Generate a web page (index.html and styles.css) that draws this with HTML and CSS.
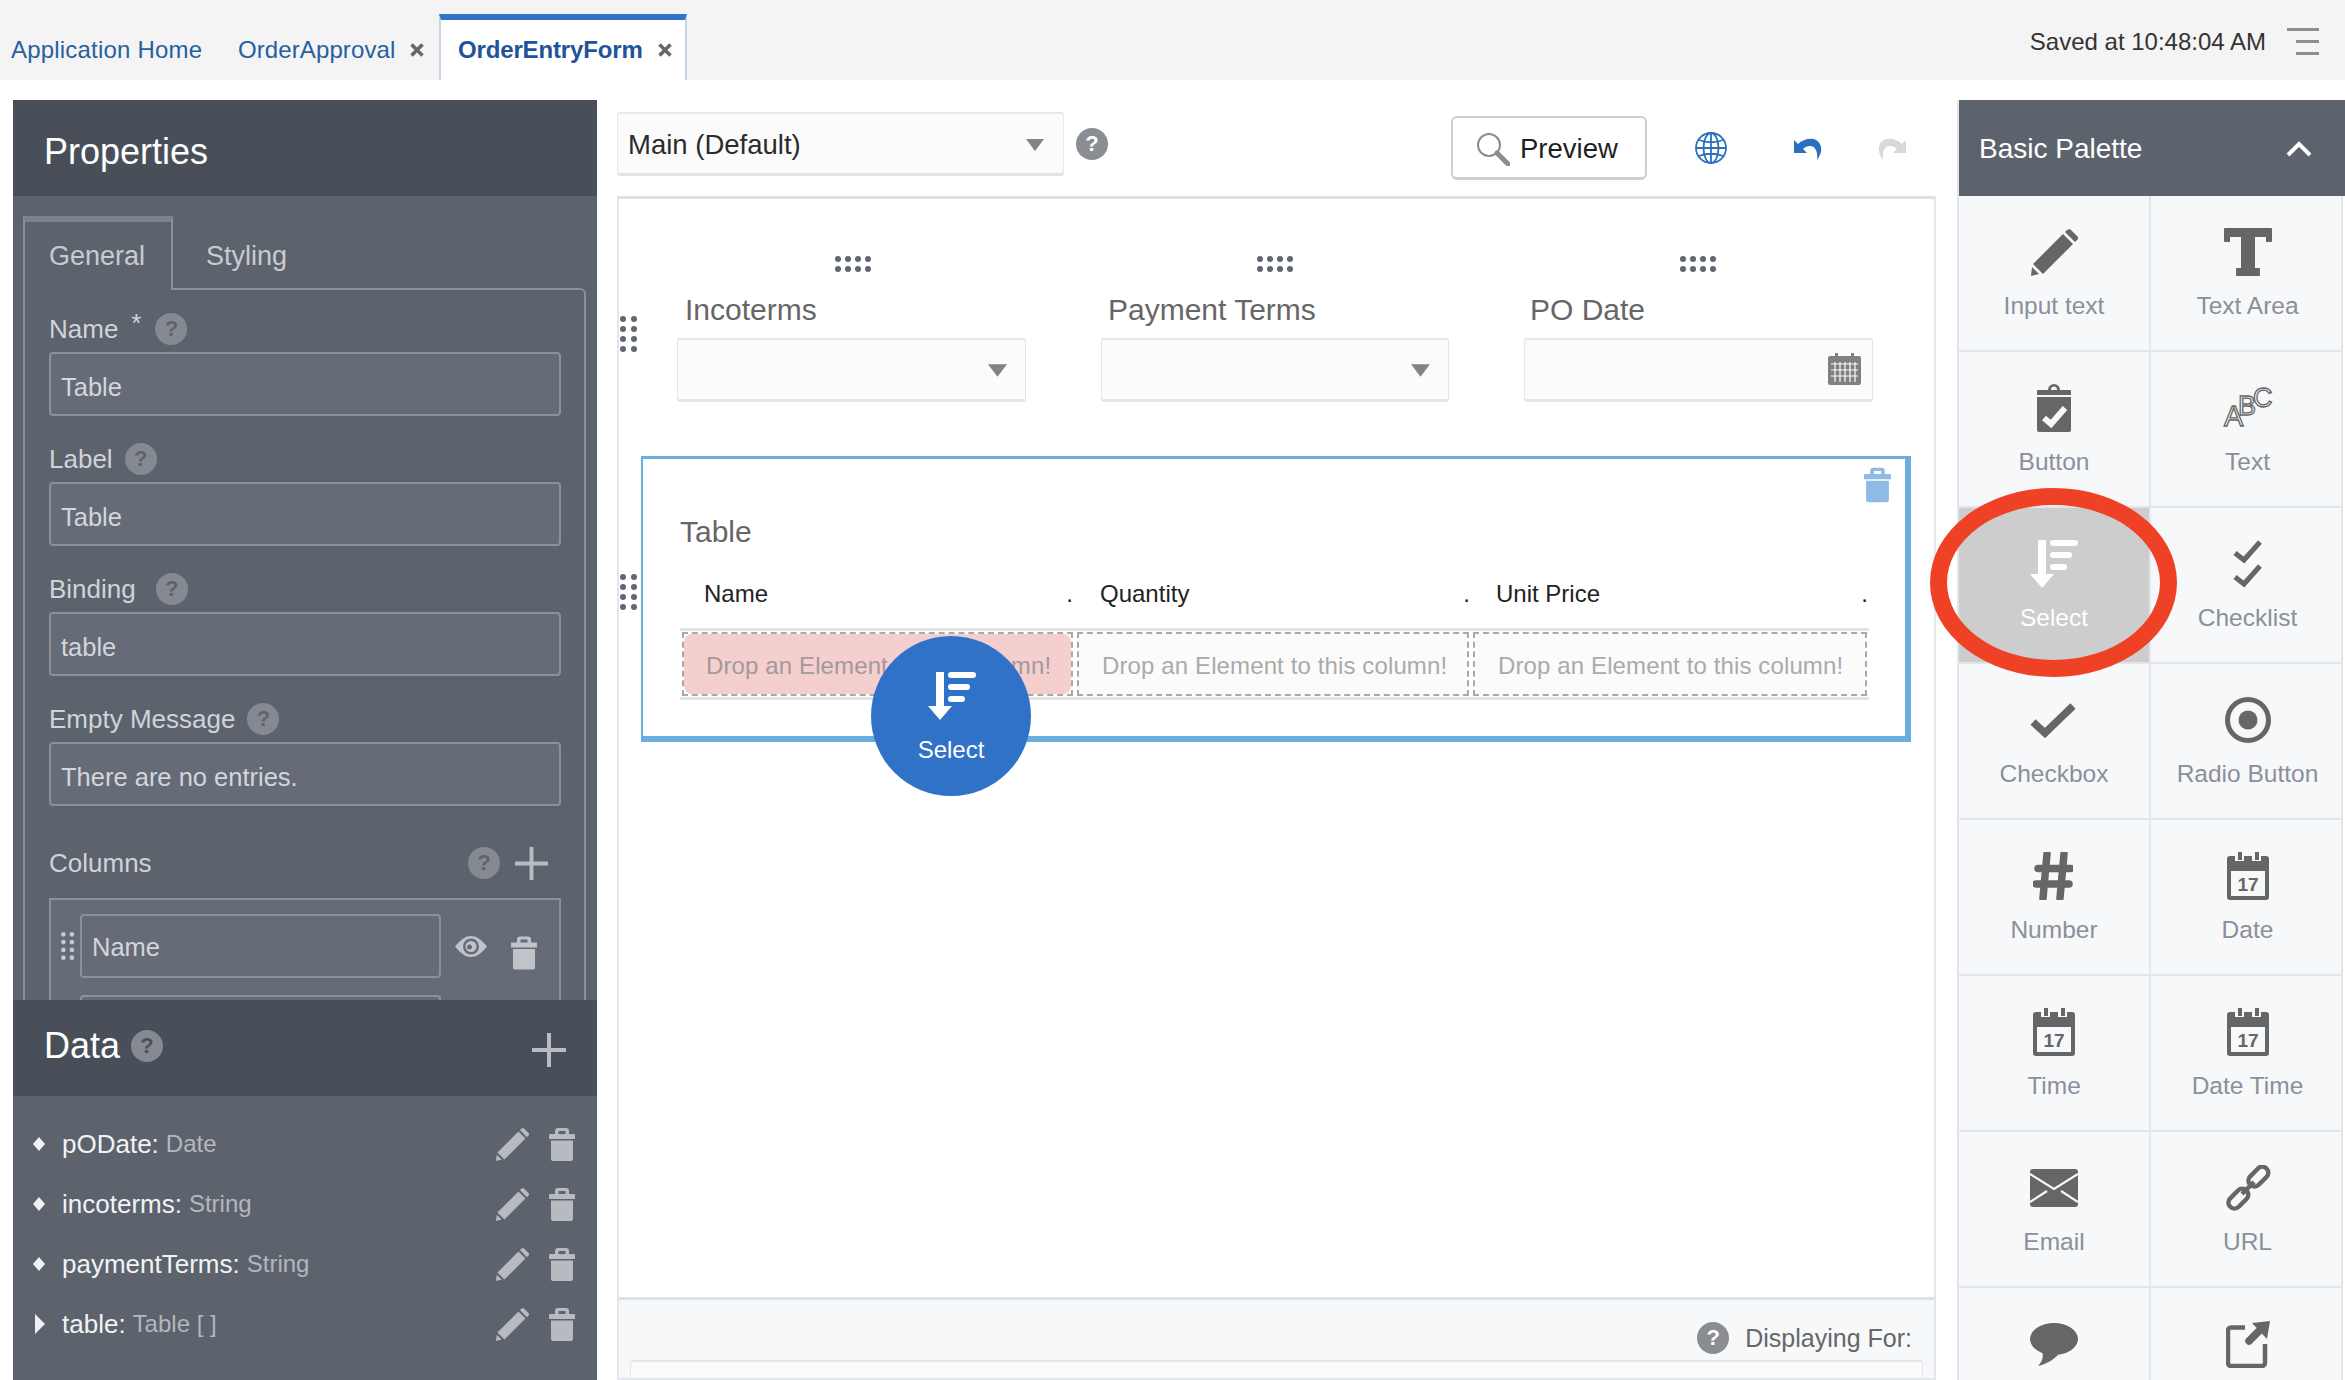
FILE: index.html
```html
<!DOCTYPE html>
<html lang="en">
<head>
<meta charset="utf-8">
<title>OrderEntryForm</title>
<link rel="stylesheet" href="styles.css">
</head>
<body>
<svg class="defs" width="0" height="0">
  <symbol id="i-trash" viewBox="0 0 26 33"><path fill-rule="evenodd" d="M9 0h8a3 3 0 0 1 3 3v3h5a1 1 0 0 1 1 1v4H0V7a1 1 0 0 1 1-1h5V3a3 3 0 0 1 3-3zM9.500 3v3h7V3z"/><path d="M2 12.500h22V31a2 2 0 0 1-2 2H4a2 2 0 0 1-2-2z"/></symbol>
  <symbol id="i-pencil" viewBox="0 0 47 47"><path d="M36 1l3-1 8 8v2l-3 3L34 3zM32 5l10 10-30 30L2 35zM0 47l1-9 7 7z"/></symbol>
  <symbol id="i-plus" viewBox="0 0 34 34"><path d="M15 0h4v15h15v4H19v15h-4V19H0v-4h15z"/></symbol>
  <symbol id="i-dots-v" viewBox="0 0 18 36"><g><circle cx="3" cy="3" r="3"/><circle cx="14" cy="3" r="3"/><circle cx="3" cy="13" r="3"/><circle cx="14" cy="13" r="3"/><circle cx="3" cy="23" r="3"/><circle cx="14" cy="23" r="3"/><circle cx="3" cy="33" r="3"/><circle cx="14" cy="33" r="3"/></g></symbol>
  <symbol id="i-dots-h" viewBox="0 0 37 16"><g><circle cx="3" cy="3" r="3"/><circle cx="13" cy="3" r="3"/><circle cx="23" cy="3" r="3"/><circle cx="33" cy="3" r="3"/><circle cx="3" cy="13" r="3"/><circle cx="13" cy="13" r="3"/><circle cx="23" cy="13" r="3"/><circle cx="33" cy="13" r="3"/></g></symbol>
  <symbol id="i-select" viewBox="0 0 48 48"><path d="M8 0h8v34h8L12 48 0 34h8z"/><rect x="20" y="0" width="28" height="6" rx="3"/><rect x="20" y="12" width="22" height="6" rx="3"/><rect x="20" y="24" width="17" height="6" rx="3"/></symbol>
  <symbol id="i-caret" viewBox="0 0 18 12"><path d="M0 0h18L9 12z"/></symbol>
  <symbol id="i-close" viewBox="0 0 14 14"><path d="M1.500 1.500l11 11M12.500 1.500l-11 11" fill="none" stroke="#666" stroke-width="3.500"/></symbol>
  <symbol id="i-cal" viewBox="0 0 42 48"><path fill-rule="evenodd" d="M3 4h5v5h9V4h8v5h9V4h5a3 3 0 0 1 3 3v38a3 3 0 0 1-3 3H3a3 3 0 0 1-3-3V7a3 3 0 0 1 3-3zM4 19v25h34V19z"/><rect x="11" y="0" width="4" height="8"/><rect x="28" y="0" width="4" height="8"/></symbol>
</svg>

<header class="topbar">
  <nav class="tabs">
    <a class="tab tab-home">Application Home</a>
    <a class="tab tab-plain">OrderApproval<svg class="close"><use href="#i-close"/></svg></a>
    <a class="tab tab-active">OrderEntryForm<svg class="close"><use href="#i-close"/></svg></a>
  </nav>
  <div class="status">
    <span>Saved at 10:48:04 AM</span>
    <div class="menu-lines"><i class="line-long"></i><i></i><i></i></div>
  </div>
</header>

<main class="workspace">
  <aside class="left-col">
    <section class="properties">
      <h2 class="dark-head head-props">Properties</h2>
      <div class="props-body">
        <div class="prop-tabs">
          <div class="prop-tab active">General</div>
          <div class="prop-tab">Styling</div>
        </div>
        <div class="prop-box">
          <div class="field-group">
            <div class="label-row"><span>Name</span><span class="star">*</span><span class="help help-dark">?</span></div>
            <div class="prop-input">Table</div>
          </div>
          <div class="field-group">
            <div class="label-row"><span>Label</span><span class="help help-dark">?</span></div>
            <div class="prop-input">Table</div>
          </div>
          <div class="field-group">
            <div class="label-row"><span>Binding</span><span class="help help-dark gap-wide">?</span></div>
            <div class="prop-input">table</div>
          </div>
          <div class="field-group">
            <div class="label-row"><span>Empty Message</span><span class="help help-dark">?</span></div>
            <div class="prop-input">There are no entries.</div>
          </div>
          <div class="columns-row">
            <span>Columns</span>
            <span class="help help-dark">?</span>
            <svg class="plus plus-sm"><use href="#i-plus"/></svg>
          </div>
          <div class="columns-box">
            <div class="col-row">
              <svg class="col-dots"><use href="#i-dots-v"/></svg>
              <div class="prop-input col-input">Name</div>
              <svg class="eye" viewBox="0 0 32 21"><path fill="#c0c3c8" d="M0 10.500C6 3 11 0 16 0s10 3 16 10.500C26 18 21 21 16 21S6 18 0 10.500z"/><circle cx="16" cy="10.500" r="8" fill="#656c77"/><circle cx="16" cy="10.500" r="5.500" fill="#c0c3c8"/><circle cx="14.500" cy="11" r="2.500" fill="#656c77"/></svg>
              <svg class="trash trash-col"><use href="#i-trash"/></svg>
            </div>
            <div class="col-row">
              <svg class="col-dots"><use href="#i-dots-v"/></svg>
              <div class="prop-input col-input"></div>
            </div>
          </div>
        </div>
      </div>
    </section>
    <section class="data">
      <div class="dark-head head-data">
        <h2 class="data-title">Data</h2>
        <span class="help help-head">?</span>
        <svg class="plus plus-head"><use href="#i-plus"/></svg>
      </div>
      <ul class="data-list">
        <li class="data-row"><svg class="bullet" viewBox="0 0 14 14"><path d="M7 0l6 7-6 7-6-7z"/></svg><span class="data-name">pODate:</span><span class="data-type">Date</span><svg class="act-pencil"><use href="#i-pencil"/></svg><svg class="act-trash"><use href="#i-trash"/></svg></li>
        <li class="data-row"><svg class="bullet" viewBox="0 0 14 14"><path d="M7 0l6 7-6 7-6-7z"/></svg><span class="data-name">incoterms:</span><span class="data-type">String</span><svg class="act-pencil"><use href="#i-pencil"/></svg><svg class="act-trash"><use href="#i-trash"/></svg></li>
        <li class="data-row"><svg class="bullet" viewBox="0 0 14 14"><path d="M7 0l6 7-6 7-6-7z"/></svg><span class="data-name">paymentTerms:</span><span class="data-type">String</span><svg class="act-pencil"><use href="#i-pencil"/></svg><svg class="act-trash"><use href="#i-trash"/></svg></li>
        <li class="data-row"><svg class="bullet" viewBox="0 0 14 20"><path d="M3 0l10 10L3 20z"/></svg><span class="data-name">table:</span><span class="data-type">Table [ ]</span><svg class="act-pencil"><use href="#i-pencil"/></svg><svg class="act-trash"><use href="#i-trash"/></svg></li>
      </ul>
    </section>
  </aside>

  <section class="center-col">
    <div class="toolbar">
      <div class="view-select"><span>Main (Default)</span><svg class="caret"><use href="#i-caret"/></svg></div>
      <span class="help help-light help-toolbar">?</span>
      <div class="spacer"></div>
      <button class="preview">
        <svg class="search" viewBox="0 0 34 34"><circle cx="13" cy="13" r="11" fill="none" stroke="#8c8c8c" stroke-width="2"/><path d="M21 21l11 11" stroke="#8c8c8c" stroke-width="5" stroke-linecap="round"/></svg>
        <span>Preview</span>
      </button>
      <svg class="globe" viewBox="0 0 32 32"><g fill="none" stroke="#2a6fc0" stroke-width="1.800"><circle cx="16" cy="16" r="15"/><ellipse cx="16" cy="16" rx="7.500" ry="15"/><path d="M16 1v30M1 16h30M4 8c8 3 16 3 24 0M4 24c8-3 16-3 24 0"/></g></svg>
      <svg class="undo" viewBox="0 0 30 25"><path d="M2 5l4 4c6-6 18-8 22 0 3 6 0 12-3 16 1-7-1-14-7-14-3 0-5 1-7 3l4 4H2z"/></svg>
      <svg class="redo" viewBox="0 0 30 25"><path d="M28 5l-4 4C18 3 6 1 2 9c-3 6 0 12 3 16-1-7 1-14 7-14 3 0 5 1 7 3l-4 4h13z"/></svg>
    </div>

    <div class="canvas">
      <div class="canvas-main">
        <div class="form-row">
          <svg class="side-handle handle-form"><use href="#i-dots-v"/></svg>
          <div class="form-cols">
            <div class="form-col"><svg class="top-handle"><use href="#i-dots-h"/></svg><div class="form-label">Incoterms</div><div class="form-field"><svg class="caret caret-field"><use href="#i-caret"/></svg></div></div>
            <div class="form-col"><svg class="top-handle"><use href="#i-dots-h"/></svg><div class="form-label">Payment Terms</div><div class="form-field"><svg class="caret caret-field"><use href="#i-caret"/></svg></div></div>
            <div class="form-col"><svg class="top-handle"><use href="#i-dots-h"/></svg><div class="form-label">PO Date</div><div class="form-field">
              <svg class="mini-cal" viewBox="0 0 33 32"><path d="M2 3h5V0h3v3h13V0h3v3h5a2 2 0 0 1 2 2v25a2 2 0 0 1-2 2H2a2 2 0 0 1-2-2V5a2 2 0 0 1 2-2z" fill="#808080"/><path d="M3 11h27M3 17h27M3 23h27M7 9v20M12 9v20M17 9v20M22 9v20M27 9v20" stroke="#fbfbfb" stroke-width="1.200"/></svg>
            </div></div>
          </div>
        </div>

        <div class="table-row">
          <svg class="side-handle handle-table"><use href="#i-dots-v"/></svg>
          <div class="table-box">
            <svg class="trash-selected"><use href="#i-trash"/></svg>
            <div class="table-title">Table</div>
            <div class="table-grid head">
              <div class="th"><span>Name</span><span>.</span></div>
              <div class="th"><span>Quantity</span><span>.</span></div>
              <div class="th"><span>Unit Price</span><span>.</span></div>
            </div>
            <div class="table-grid body">
              <div class="drop"><div class="drop-inner hot">Drop an Element to this column!</div></div>
              <div class="drop"><div class="drop-inner">Drop an Element to this column!</div></div>
              <div class="drop"><div class="drop-inner">Drop an Element to this column!</div></div>
            </div>
          </div>
        </div>

        <div class="drag-ghost">
          <svg class="ghost-icon"><use href="#i-select"/></svg>
          <span>Select</span>
        </div>
      </div>

      <div class="canvas-foot">
        <div class="foot-row"><span class="help help-light">?</span><span>Displaying For:</span></div>
        <div class="foot-input"></div>
      </div>
    </div>
  </section>

  <aside class="palette">
    <div class="palette-head"><span>Basic Palette</span><svg class="chevron" viewBox="0 0 26 16"><path d="M2 14L13 3l11 11" fill="none" stroke="#fff" stroke-width="4"/></svg></div>
    <div class="palette-grid">
      <div class="pal-cell"><div class="pal-icon"><svg class="ic w47 h47"><use href="#i-pencil"/></svg></div><span>Input text</span></div>
      <div class="pal-cell"><div class="pal-icon"><svg class="ic w48 h48" viewBox="0 0 48 48"><path d="M1 0h46a1 1 0 0 1 1 1v12a1 1 0 0 1-1 1h-5V9H31v31h4a1 1 0 0 1 1 1v6a1 1 0 0 1-1 1H13a1 1 0 0 1-1-1v-6a1 1 0 0 1 1-1h4V9H6v5H1a1 1 0 0 1-1-1V1a1 1 0 0 1 1-1z"/></svg></div><span>Text Area</span></div>
      <div class="pal-cell"><div class="pal-icon"><svg class="ic w34 h48" viewBox="0 0 34 48"><path fill-rule="evenodd" d="M1 6h10a6 6 0 0 1 12 0h10a1 1 0 0 1 1 1v4H0V7a1 1 0 0 1 1-1zm16-3.500a3 3 0 0 0-3 3.500h6a3 3 0 0 0-3-3.500z"/><path d="M0 13h34v33a2 2 0 0 1-2 2H2a2 2 0 0 1-2-2z"/><path d="M7 34l7 6 14-16" fill="none" stroke="#f7f8fa" stroke-width="6"/></svg></div><span>Button</span></div>
      <div class="pal-cell"><div class="pal-icon"><svg class="ic w48 h42 abc-icon" viewBox="0 0 48 42"><g class="abc"><text x="0" y="39" class="abc-a">A</text><text x="14" y="28">B</text><text x="29" y="20">C</text></g></svg></div><span>Text</span></div>
      <div class="pal-cell selected"><div class="pal-icon"><svg class="ic w48 h48"><use href="#i-select"/></svg></div><span>Select</span></div>
      <div class="pal-cell"><div class="pal-icon"><svg class="ic w30 h48" viewBox="0 0 30 48"><path d="M2 13l9 7L27 2M2 37l9 7L27 26" fill="none" stroke="#666" stroke-width="5"/></svg></div><span>Checklist</span></div>
      <div class="pal-cell"><div class="pal-icon shift-left"><svg class="ic w46 h35" viewBox="0 0 46 35"><path d="M3 19l12 11L43 3" fill="none" stroke="#666" stroke-width="7.500"/></svg></div><span>Checkbox</span></div>
      <div class="pal-cell"><div class="pal-icon"><svg class="ic w46 h46" viewBox="0 0 46 46"><circle cx="23" cy="23" r="20.500" fill="none" stroke="#666" stroke-width="5"/><circle cx="23" cy="23" r="9.500"/></svg></div><span>Radio Button</span></div>
      <div class="pal-cell"><div class="pal-icon shift-left"><svg class="ic w40 h48" viewBox="0 0 40 48"><path d="M14 2l-4 44M31 2l-4 44M5 16.500h33M3 32h33" fill="none" stroke="#666" stroke-width="7.500" stroke-linecap="round"/></svg></div><span>Number</span></div>
      <div class="pal-cell"><div class="pal-icon"><svg class="ic w42 h48" viewBox="0 0 42 48"><use href="#i-cal" width="42" height="48"/><text x="21" y="39" text-anchor="middle" class="cal-num">17</text></svg></div><span>Date</span></div>
      <div class="pal-cell"><div class="pal-icon"><svg class="ic w42 h48" viewBox="0 0 42 48"><use href="#i-cal" width="42" height="48"/><text x="21" y="39" text-anchor="middle" class="cal-num">17</text></svg></div><span>Time</span></div>
      <div class="pal-cell"><div class="pal-icon"><svg class="ic w42 h48" viewBox="0 0 42 48"><use href="#i-cal" width="42" height="48"/><text x="21" y="39" text-anchor="middle" class="cal-num">17</text></svg></div><span>Date Time</span></div>
      <div class="pal-cell"><div class="pal-icon"><svg class="ic w48 h38" viewBox="0 0 48 38"><rect width="48" height="38" rx="3"/><path d="M0 5l24 15L48 5M0 33l17-11M48 33L31 22" fill="none" stroke="#f7f8fa" stroke-width="2.200"/></svg></div><span>Email</span></div>
      <div class="pal-cell"><div class="pal-icon"><svg class="ic w46 h46" viewBox="0 0 46 46"><g fill="none" stroke="#666" stroke-width="4.500"><rect x="22" y="6" width="23" height="12" rx="6" transform="rotate(-45 33 12)"/><rect x="2" y="28" width="23" height="12" rx="6" transform="rotate(-45 13 34)"/><path d="M17 29l12-12"/></g></svg></div><span>URL</span></div>
      <div class="pal-cell"><div class="pal-icon"><svg class="ic w48 h43" viewBox="0 0 48 43"><ellipse cx="24" cy="16" rx="24" ry="16"/><path d="M12 28c2 6 0 11-4 15 8-2 15-6 20-11z"/></svg></div></div>
      <div class="pal-cell"><div class="pal-icon"><svg class="ic w44 h47" viewBox="0 0 44 47"><path d="M19 6.500H5a3 3 0 0 0-3 3V42a3 3 0 0 0 3 3h31a3 3 0 0 0 3-3V23" fill="none" stroke="#666" stroke-width="4.500"/><path d="M23 20l12-12" stroke="#666" stroke-width="7.500" stroke-linecap="round"/><path d="M26 2l18-2-3 18z"/></svg></div></div>
      <div class="highlight-ring"></div>
    </div>
  </aside>
</main>
</body>
</html>
```

FILE: styles.css
```css
* { box-sizing: border-box; }
html, body { margin: 0; padding: 0; }
body {
  width: 2345px;
  height: 1380px;
  overflow: hidden;
  background: #fff;
  font-family: "Liberation Sans", Arial, sans-serif;
  position: relative;
}
h2, ul { margin: 0; padding: 0; list-style: none; font-weight: 400; }
svg { display: block; flex: none; }
.defs { position: absolute; }
.cal-num { font: 700 19px "Liberation Sans", Arial, sans-serif; fill: #666; }

/* top bar */
.topbar {
  height: 80px;
  background: #f4f4f4;
  display: flex;
  justify-content: space-between;
  padding-left: 11px;
  padding-right: 26px;
}
.tabs { display: flex; align-items: flex-end; }
.tab {
  display: flex;
  align-items: center;
  height: 66px;
  padding-bottom: 1px;
  padding-top: 6px;
  font-size: 24px;
  color: #27609f;
  letter-spacing: 0.2px;
}
.tab-home { width: 227px; }
.tab-plain { width: 201px; letter-spacing: 0.1px; }
.tab-active {
  width: 248px;
  padding-left: 17px;
  background: #fff;
  border-top: 6px solid #3073c8;
  border-left: 2px solid #c6d3e0;
  border-right: 2px solid #c6d3e0;
  padding-top: 0;
  padding-bottom: 0;
  font-weight: 700;
  color: #1f5499;
  letter-spacing: -0.15px;
}
.close { width: 14px; height: 14px; margin-left: 15px; }
.status { display: flex; align-items: center; gap: 21px; font-size: 24px; color: #333; padding-top: 4px; }
.menu-lines { width: 32px; display: flex; flex-direction: column; align-items: flex-end; gap: 9px; margin-top: -1px; }
.menu-lines i { display: block; width: 23px; height: 3px; background: #8e8e8e; }
.menu-lines .line-long { width: 32px; }

/* workspace */
.workspace {
  height: 1300px;
  display: flex;
  padding: 20px 0 0 13px;
}
.left-col { width: 584px; height: 1280px; display: flex; flex-direction: column; background: #5c636d; }
.dark-head { height: 96px; background: #484f59; color: #fff; font-size: 36px; display: flex; align-items: center; padding-left: 31px; }
.head-props { padding-top: 8px; }
.properties { height: 900px; overflow: hidden; color: #d8dade; }
.props-body { padding: 20px 0 0 10px; height: 804px; overflow: hidden; }
.prop-tabs { display: flex; position: relative; z-index: 1; }
.prop-tab {
  height: 74px;
  line-height: 69px;
  font-size: 27px;
  color: #c8cbd0;
  padding-left: 33px;
  border-top: 6px solid transparent;
}
.prop-tab.active {
  width: 150px;
  padding-left: 24px;
  background: #5c636d;
  border-top: 6px solid #7b828c;
  border-left: 2px solid #8b919a;
  border-right: 2px solid #8b919a;
}
.prop-box {
  margin-top: -2px;
  width: 563px;
  height: 800px;
  border: 2px solid #8b919a;
  border-radius: 0 6px 0 0;
  padding: 21px 23px 0 24px;
}
.field-group { margin-bottom: 25px; }
.label-row { height: 36px; margin-bottom: 5px; display: flex; align-items: center; font-size: 26px; color: #d0d3d7; }
.star { font-size: 26px; line-height: 1; margin: -12px 2px 0 13px; height: 26px; }
.help {
  flex: none;
  width: 32px;
  height: 32px;
  border-radius: 50%;
  display: flex;
  align-items: center;
  justify-content: center;
  font-size: 22px;
  font-weight: 700;
}
.help-dark { background: #858a92; color: #5c636d; margin-left: 12px; }
.gap-wide { margin-left: 20px; }
.prop-input {
  height: 64px;
  background: #656c77;
  border: 2px solid #8b919a;
  border-radius: 4px;
  padding: 6px 0 0 10px;
  display: flex;
  align-items: center;
  font-size: 25.500px;
  color: #d4d6da;
}
.columns-row { margin-top: 39px; height: 36px; display: flex; align-items: center; font-size: 26px; color: #d0d3d7; }
.columns-row > span:first-child { flex: 1; }
.plus { fill: #b9bdc3; }
.plus-sm { width: 33px; height: 33px; margin-left: 15px; margin-right: 13px; }
.columns-box {
  margin-top: 17px;
  background: #656c77;
  border: 2px solid #8b919a;
  padding: 14px 0 0 10px;
  height: 300px;
}
.col-row { display: flex; align-items: center; height: 64px; margin-bottom: 17px; }
.col-dots { width: 14px; height: 36px; fill: #c5c8cd; margin-right: 5px; }
.col-input { width: 361px; padding-top: 2px; }
.eye { width: 32px; height: 21px; margin-left: 14px; }
.trash { fill: #c0c3c8; }
.trash-col { width: 26px; height: 34px; margin-left: 24px; margin-top: 14px; }

.data { flex: 1; }
.head-data { padding-right: 31px; padding-bottom: 4px; }
.data-title { font-size: 36px; color: #fff; }
.help-head { background: #858a92; color: #484f59; margin-left: 11px; }
.plus-head { width: 34px; height: 34px; margin-left: auto; margin-top: 8px; }
.data-list { padding-top: 18px; }
.data-row { height: 60px; display: flex; align-items: center; padding: 0 22px 0 19px; }
.bullet { width: 14px; height: 14px; fill: #f0f1f2; margin-right: 16px; }
.data-row:last-child .bullet { height: 20px; }
.data-name { font-size: 26px; color: #f2f3f4; margin-right: 7px; }
.data-type { font-size: 24px; color: #b4b7bc; flex: 1; }
.act-pencil { width: 33px; height: 33px; fill: #b7babe; margin-right: 20px; margin-top: 1px; }
.act-trash { width: 26px; height: 33px; fill: #b7babe; margin-top: 1px; }

/* center */
.center-col { width: 1319px; margin-left: 20px; display: flex; flex-direction: column; height: 1280px; }
.toolbar { height: 96px; flex: none; display: flex; align-items: flex-start; }
.view-select {
  width: 447px;
  height: 64px;
  margin-top: 12px;
  background: #fbfbfb;
  border: 1px solid #e8e8e8;
  border-bottom: 3px solid #e3e3e3;
  border-top: 2px solid #e8e8e8;
  border-radius: 3px;
  display: flex;
  align-items: center;
  justify-content: space-between;
  padding: 2px 19px 0 10px;
  font-size: 27.500px;
  color: #2b2b2b;
}
.caret { width: 18px; height: 12px; fill: #808487; }
.help-light { background: #8a8d91; color: #fff; }
.help-toolbar { margin: 28px 0 0 12px; }
.spacer { flex: 1; }
.preview {
  width: 196px;
  height: 64px;
  margin-top: 16px;
  background: #fff;
  border: 2px solid #cfcfcf;
  border-bottom-width: 3px;
  border-radius: 6px;
  display: flex;
  align-items: center;
  padding: 2px 0 0 23px;
  font: 27.500px "Liberation Sans", Arial, sans-serif;
  color: #1f1f1f;
}
.search { width: 34px; height: 34px; margin-right: 10px; }
.globe { width: 32px; height: 32px; margin: 32px 0 0 48px; }
.undo { width: 30px; height: 25px; margin: 35px 0 0 65px; fill: #2a6fc0; }
.redo { width: 30px; height: 25px; margin: 35px 28px 0 56px; fill: #d8d8d8; }

.canvas {
  flex: 1;
  border: 2px solid #e3e7ec;
  border-top: 3px solid #dce1e7;
  display: flex;
  flex-direction: column;
  min-height: 0;
  overflow: hidden;
}
.canvas-main { height: 1098px; flex: none; position: relative; padding-top: 58px; }
.form-row, .table-row { display: flex; align-items: flex-start; }
.side-handle { width: 18px; height: 36px; fill: #5f666f; margin-left: 1px; }
.handle-form { margin-top: 59px; }
.handle-table { margin-top: 118px; }
.form-cols { display: flex; gap: 75px; margin-left: 39px; }
.form-col { width: 349px; }
.form-col:nth-child(2) { width: 348px; }
.top-handle { width: 37px; height: 16px; fill: #5f666f; margin: 0 auto; position: relative; left: 2px; top: -1px; }
.form-col:nth-child(n+2) .top-handle { left: 0; }
.form-label { height: 36px; line-height: 36px; margin-top: 19px; padding-left: 8px; font-size: 30px; color: #666; }
.form-col:nth-child(n+2) .form-label { padding-left: 7px; }
.form-col:nth-child(3) .form-label { padding-left: 6px; }
.form-field {
  height: 64px;
  margin-top: 10px;
  background: #fbfbfb;
  border: 1px solid #e6e6e6;
  border-top-width: 2px;
  border-bottom-width: 3px;
  border-radius: 3px;
  display: flex;
  align-items: center;
  justify-content: flex-end;
  padding-right: 18px;
}
.caret-field { width: 19px; height: 15px; margin-top: 1px; }
.mini-cal { width: 33px; height: 32px; margin-right: -7px; margin-top: -2px; }
.form-cols .form-col:nth-child(2) .form-field { padding-right: 18px; }

.table-row { margin-top: 54px; }
.table-box {
  position: relative;
  width: 1270px;
  height: 286px;
  margin-left: 3px;
  border-style: solid;
  border-color: #6aaee0;
  border-width: 3px 6px 6px 2px;
  padding: 55px 0 0 37px;
}
.trash-selected { position: absolute; right: 14px; top: 8px; width: 27px; height: 36px; fill: #8fbae6; }
.table-title { height: 36px; line-height: 36px; font-size: 30px; color: #666; }
.table-grid { display: grid; grid-template-columns: 395px 396px 398px; width: 1189px; }
.head { margin-top: 29px; height: 49px; }
.th { display: flex; justify-content: space-between; padding: 0 2px 0 24px; font-size: 24px; color: #222; height: 30px; line-height: 30px; }
.th:nth-child(n+2) { padding: 0 1px 0 25px; }
.body { border-top: 3px solid #e3e3e3; border-bottom: 3px solid #e3e3e3; padding: 1px 0; height: 72px; }
.drop { margin: 0 2px; height: 64px; border: 2px dashed #a9a9a9; display: flex; }
.drop-inner {
  flex: 1;
  display: flex;
  align-items: center;
  padding: 3px 0 0 22px;
  font-size: 24px;
  letter-spacing: 0.12px;
  white-space: nowrap;
  overflow: hidden;
  color: #aaa;
  background: #fbfbfb;
}
.drop:nth-child(n+2) .drop-inner { padding-left: 23px; }
.drop-inner.hot { background: #f5cece; border-radius: 8px; color: #a3999b; }

.drag-ghost {
  position: absolute;
  left: 252px;
  top: 437px;
  width: 160px;
  height: 160px;
  border-radius: 50%;
  background: #2f72c8;
  color: #fff;
  font-size: 24px;
  display: flex;
  flex-direction: column;
  align-items: center;
}
.ghost-icon { width: 48px; height: 48px; fill: #fff; margin-top: 36px; margin-left: 2px; }
.drag-ghost span { margin-top: 15px; line-height: 30px; }

.canvas-foot { flex: none; height: 90px; border-top: 3px solid #dce1e6; background: #f7f8fa; padding: 22px 22px 0 11px; }
.foot-row { display: flex; justify-content: flex-end; align-items: center; gap: 16px; font-size: 25px; color: #666; height: 32px; }
.foot-input { margin: 6px -11px 0 0; height: 100px; background: #fbfbfb; border: 1px solid #e6e6e6; border-top-width: 2px; border-radius: 3px; }

/* palette */
.palette { width: 388px; margin-left: 21px; border-left: 2px solid #e2e6ec; height: 1280px; position: relative; }
.palette-head {
  height: 96px;
  background: #5c636d;
  color: #fff;
  font-size: 28px;
  display: flex;
  align-items: center;
  justify-content: space-between;
  padding: 2px 33px 0 20px;
}
.chevron { width: 26px; height: 16px; }
.palette-grid { display: grid; grid-template-columns: 192px 192px; grid-auto-rows: 156px; position: relative; }
.pal-cell {
  background: #f7f8fa;
  border-right: 2px solid #e2e6ec;
  border-bottom: 2px solid #e2e6ec;
  padding-top: 32px;
  display: flex;
  flex-direction: column;
  align-items: center;
  font-size: 24.500px;
  color: #8a9099;
}
.pal-cell:nth-child(even) { padding-left: 3px; }
.pal-icon { height: 48px; display: flex; align-items: center; justify-content: center; fill: #666; margin-bottom: 15px; }
.shift-left { margin-left: -3px; }
.pal-cell > span { line-height: 30px; }
.ic { fill: #666; }
.w30 { width: 30px; } .w34 { width: 34px; } .w40 { width: 40px; } .w42 { width: 42px; } .w44 { width: 44px; } .w46 { width: 46px; } .w47 { width: 47px; } .w48 { width: 48px; }
.h35 { height: 35px; } .h38 { height: 38px; } .h42 { height: 42px; } .h43 { height: 43px; } .h46 { height: 46px; } .h47 { height: 47px; } .h48 { height: 48px; }
.abc-icon { overflow: visible; }
.abc text { font: 400 27px "Liberation Sans", Arial, sans-serif; fill: #f7f8fa; stroke: #666; stroke-width: 1.300px; }
.abc .abc-a { font-size: 29px; }
.pal-cell.selected { background: #cdcdcd; color: #fff; border-right-color: #e2e6ec; }
.pal-cell.selected .ic { fill: #fff; }
.highlight-ring {
  position: absolute;
  left: -29px;
  top: 292px;
  width: 247px;
  height: 189px;
  border: 17px solid #ee4125;
  border-radius: 50%;
  pointer-events: none;
}
```
